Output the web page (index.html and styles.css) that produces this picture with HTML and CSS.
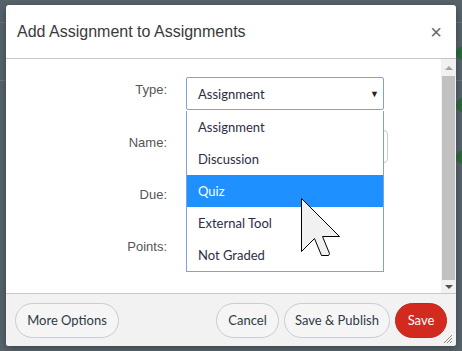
FILE: index.html
```html
<!DOCTYPE html>
<html>
<head>
<meta charset="utf-8">
<link rel="stylesheet" href="styles.css">
</head>
<body>
<div class="bg">
  <div class="bg-line l1"></div>
  <div class="bg-line l2"></div>
  <div class="dot d1"></div>
  <div class="dot d2"></div>
  <div class="dot d3"></div>
</div>
<div class="modal">
  <div class="header">
    <div class="title">Add Assignment to Assignments</div>
    <div class="close">&times;</div>
  </div>
  <div class="body">
    <div class="form">
      <div class="row">
        <div class="label">Type:</div>
        <div class="select">Assignment<span class="caret">&#9660;</span></div>
      </div>
      <div class="row">
        <div class="label">Name:</div>
        <div class="input"></div>
      </div>
      <div class="row">
        <div class="label">Due:</div>
      </div>
      <div class="row">
        <div class="label">Points:</div>
      </div>
      <ul class="dropdown">
        <li>Assignment</li>
        <li>Discussion</li>
        <li class="active">Quiz</li>
        <li>External Tool</li>
        <li>Not Graded</li>
      </ul>
    </div>
    <div class="scrollbar">
      <div class="arrow up"></div>
      <div class="thumb"></div>
      <div class="arrow down"></div>
    </div>
  </div>
  <div class="footer">
    <button class="btn more">More Options</button>
    <div class="spacer"></div>
    <button class="btn cancel">Cancel</button>
    <button class="btn publish">Save &amp; Publish</button>
    <button class="btn primary">Save</button>
    <svg class="grip" width="10" height="10" viewBox="0 0 10 10"><path d="M9 1L1 9M9 4L4 9M9 7L7 9" stroke="#888" stroke-width="1"/></svg>
  </div>
</div>
<svg class="cursor" width="42" height="62" viewBox="0 0 42 62">
  <polygon points="1.5,1.5 1.5,54.5 14.5,41.5 21.5,58.5 28.5,58.5 29.5,56.5 22.5,39.5 39.5,39.5" fill="#f0f1f0" stroke="#000" stroke-width="1"/>
</svg>
</body>
</html>
```

FILE: styles.css
```css
* { box-sizing: border-box; }
html, body { margin: 0; padding: 0; }
body {
  width: 462px;
  height: 351px;
  background: #58646c;
  position: relative;
  overflow: hidden;
  font-family: "Liberation Sans", Arial, sans-serif;
}
.bg { position: absolute; inset: 0; }
.bg-line { position: absolute; left: 0; right: 0; height: 1px; background: #6a757c; }
.l1 { top: 22px; }
.l2 { top: 80px; }
.dot { position: absolute; left: 456px; width: 14px; height: 14px; border-radius: 50%; background: #2e6a3e; }
.d1 { top: 46px; }
.d2 { top: 98px; }
.d3 { top: 150px; }

.modal {
  position: absolute;
  left: 6px;
  top: 5px;
  width: 450px;
  height: 341px;
  background: #fff;
  border-radius: 3px;
  display: flex;
  flex-direction: column;
  box-shadow: 0 2px 8px rgba(0,0,0,0.35);
}
.header {
  height: 54px;
  border-bottom: 1px solid #c8c8c8;
  display: flex;
  align-items: center;
  padding: 0 14px 0 11px;
}
.title {
  flex: 1;
  font-size: 16px;
  color: #3a3a3a;
  padding-top: 1px;
}
.close {
  font-size: 20px;
  color: #666;
  line-height: 1;
}
.body {
  flex: 1;
  display: flex;
  min-height: 0;
}
.form {
  flex: 1;
  position: relative;
  padding-top: 18px;
}
.row {
  display: flex;
  height: 33px;
  margin-bottom: 19px;
}
.row:first-child { margin-bottom: 20px; }
.label {
  width: 161px;
  text-align: right;
  font-size: 13px;
  color: #555;
  padding-top: 5px;
}
.select {
  margin-left: 19px;
  width: 198px;
  height: 33px;
  border: 1px solid #7fa3d8;
  border-radius: 2px;
  font-family: Lato, sans-serif;
  font-size: 13px;
  color: #2d2d3d;
  padding: 8px 0 0 11px;
  position: relative;
}
.caret {
  position: absolute;
  right: 4px;
  top: 10px;
  font-size: 9px;
  color: #222;
}
.input {
  margin-left: 19px;
  width: 202px;
  height: 33px;
  border: 1px solid #c8ccd0;
  border-radius: 4px;
}
.dropdown {
  position: absolute;
  left: 180px;
  top: 52px;
  width: 198px;
  margin: 0;
  padding: 0;
  list-style: none;
  background: #fff;
  border: 1px solid #7fa3d8;
  border-top: none;
}
.dropdown li {
  height: 32px;
  line-height: 33px;
  padding-left: 11px;
  font-family: Lato, sans-serif;
  font-size: 13px;
  color: #2d2d45;
}
.dropdown li.active {
  background: #1e90ff;
  color: #fff;
}
.scrollbar {
  width: 15px;
  background: #f1f1f1;
  display: flex;
  flex-direction: column;
  align-items: center;
}
.thumb {
  width: 13px;
  flex: 1;
  background: #c1c1c1;
}
.arrow {
  width: 0;
  height: 0;
  border-left: 4px solid transparent;
  border-right: 4px solid transparent;
}
.arrow.up { border-bottom: 4px solid #a3a3a3; margin: 7px 0 6px; }
.arrow.down { border-top: 4px solid #505050; margin: 5px 0 4px; }
.footer {
  height: 53px;
  border-top: 1px solid #c8c8c8;
  background: #f2f2f2;
  display: flex;
  align-items: center;
  padding: 0 9px;
  gap: 5px;
  position: relative;
  border-radius: 0 0 3px 3px;
}
.spacer { flex: 1; }
.btn {
  height: 35px;
  border: 1px solid #c7cdd1;
  border-radius: 18px;
  background: #f5f5f5;
  font-family: Lato, sans-serif;
  font-size: 13px;
  color: #2d3b45;
  padding: 0;
  margin: 0;
  text-align: center;
}
.btn.more { width: 104px; }
.btn.cancel { width: 63px; }
.btn.publish { width: 106px; }
.btn.primary {
  width: 52px;
  background: #d22a1e;
  border-color: #c2261b;
  color: #fff;
}
.grip {
  position: absolute;
  right: 3px;
  bottom: 2px;
}
.cursor {
  position: absolute;
  left: 300px;
  top: 197px;
}
```
